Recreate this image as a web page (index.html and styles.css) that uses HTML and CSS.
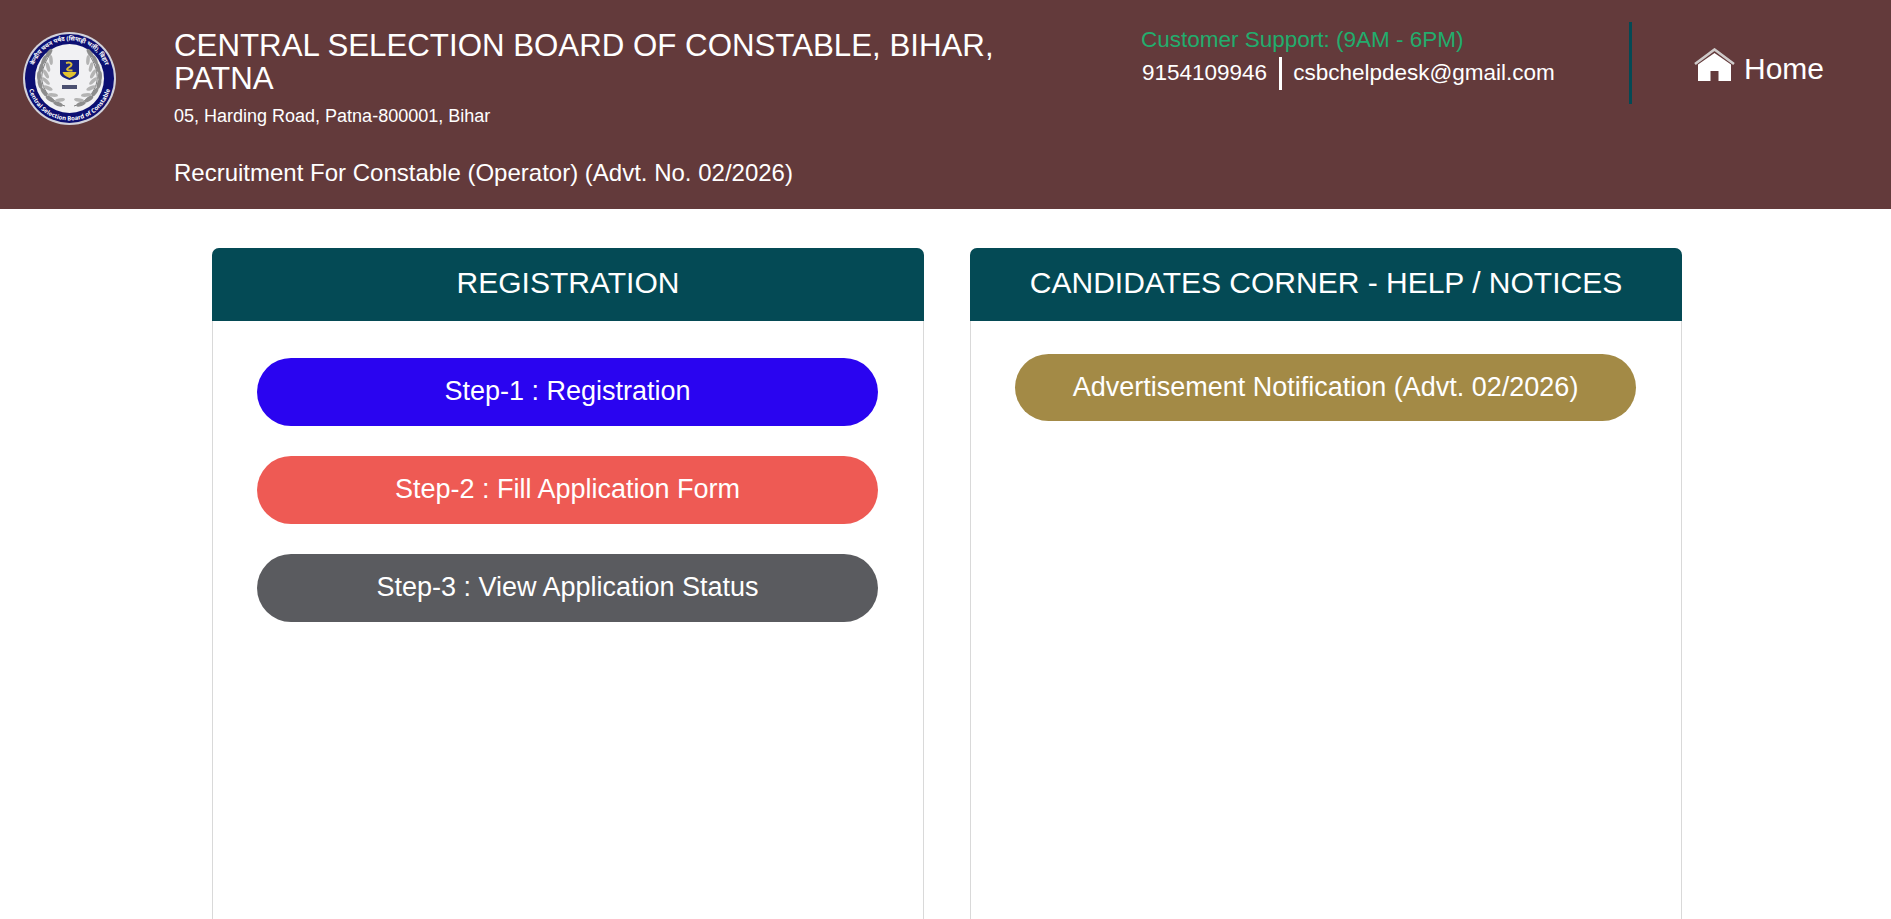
FILE: index.html
```html
<!DOCTYPE html>
<html lang="en">
<head>
<meta charset="utf-8">
<title>CSBC Bihar</title>
<link rel="stylesheet" href="styles.css">
</head>
<body>
<header class="top">
  <div class="logo-col">
    <svg class="emblem" viewBox="0 0 93 93" width="93" height="93">
      <defs>
        <path id="arc-top" d="M8.500 46.500a38 38 0 0 1 76 0"/>
        <path id="arc-bot" d="M4.500 46.500a42 42 0 0 0 84 0"/>
        <g id="branch">
          <path d="M42 74C28 70 17 56 19 42c1-7 4-14 9-21" fill="none" stroke="#7f7f7f" stroke-width="1"/>
          <g fill="#8d8d8d">
            <ellipse cx="35" cy="72" rx="5" ry="2" transform="rotate(20 35 72)"/>
            <ellipse cx="27" cy="67" rx="5" ry="2" transform="rotate(35 27 67)"/>
            <ellipse cx="21" cy="60" rx="5" ry="2" transform="rotate(55 21 60)"/>
            <ellipse cx="17" cy="52" rx="5" ry="2" transform="rotate(75 17 52)"/>
            <ellipse cx="16" cy="44" rx="5" ry="2" transform="rotate(90 16 44)"/>
            <ellipse cx="18" cy="36" rx="5" ry="2" transform="rotate(105 18 36)"/>
            <ellipse cx="21" cy="28" rx="5" ry="2" transform="rotate(115 21 28)"/>
            <ellipse cx="26" cy="21" rx="5" ry="2" transform="rotate(125 26 21)"/>
          </g>
          <g fill="#b4b4b4">
            <ellipse cx="37" cy="68" rx="5" ry="1.800" transform="rotate(-10 37 68)"/>
            <ellipse cx="30" cy="63" rx="5" ry="1.800" transform="rotate(5 30 63)"/>
            <ellipse cx="25" cy="56" rx="5" ry="1.800" transform="rotate(25 25 56)"/>
            <ellipse cx="23" cy="49" rx="5" ry="1.800" transform="rotate(45 23 49)"/>
            <ellipse cx="23" cy="42" rx="5" ry="1.800" transform="rotate(60 23 42)"/>
            <ellipse cx="25" cy="35" rx="5" ry="1.800" transform="rotate(75 25 35)"/>
            <ellipse cx="28" cy="28" rx="5" ry="1.800" transform="rotate(85 28 28)"/>
          </g>
        </g>
      </defs>
      <circle cx="46.500" cy="46.500" r="46.500" fill="#d2d2da"/>
      <circle cx="46.500" cy="46.500" r="44.500" fill="#0c0f72"/>
      <circle cx="46.500" cy="46.500" r="34.500" fill="#f1f1f3"/>
      <text class="emblem-text"><textPath href="#arc-top" startOffset="50%" text-anchor="middle">केन्द्रीय चयन पर्षद (सिपाही भर्ती), बिहार</textPath></text>
      <text class="emblem-text"><textPath href="#arc-bot" startOffset="50%" text-anchor="middle">Central Selection Board of Constable</textPath></text>
      <use href="#branch"/>
      <use href="#branch" transform="matrix(-1 0 0 1 93 0)"/>
      <path d="M37 28h19v13c0 3-4 5-9.500 7-5.500-2-9.500-4-9.500-7z" fill="#17217e"/>
      <path d="M39.500 40h14c-1 3-3 4.500-7 6-4-1.500-6-3-7-6z" fill="#e2c331"/>
      <path d="M43 31c6-1.500 7 2 3.500 4s-3.500 4 3 3.500" fill="none" stroke="#d8bd3a" stroke-width="2"/>
      <rect x="39" y="53" width="15" height="4" fill="#4b5070"/>
    </svg>
  </div>
  <div class="title-col">
    <h1 class="board">CENTRAL SELECTION BOARD OF CONSTABLE, BIHAR, PATNA</h1>
    <p class="address">05, Harding Road, Patna-800001, Bihar</p>
    <p class="recruit">Recruitment For Constable (Operator) (Advt. No. 02/2026)</p>
  </div>
  <div class="support-col">
    <div class="support-label">Customer Support: (9AM - 6PM)</div>
    <div class="contact">
      <span class="phone">9154109946</span>
      <span class="mail">csbchelpdesk@gmail.com</span>
    </div>
  </div>
  <a class="home" href="#">
    <svg class="home-icon" viewBox="0 0 41 33" width="41" height="33">
      <path d="M1 16 20.500 1.500 40 16" fill="none" stroke="#cfcbca" stroke-width="2.600"/>
      <path d="M4 33V16.500L20.500 5 37 16.500V33H24.500V23h-8v10z" fill="#fff"/>
    </svg>
    <span class="home-label">Home</span>
  </a>
</header>
<main class="panels">
  <section class="card">
    <h2 class="card-head">REGISTRATION</h2>
    <div class="card-body first">
      <a class="pill blue" href="#">Step-1 : Registration</a>
      <a class="pill red" href="#">Step-2 : Fill Application Form</a>
      <a class="pill grey" href="#">Step-3 : View Application Status</a>
    </div>
  </section>
  <section class="card">
    <h2 class="card-head">CANDIDATES CORNER - HELP / NOTICES</h2>
    <div class="card-body second">
      <a class="pill gold" href="#">Advertisement Notification (Advt. 02/2026)</a>
    </div>
  </section>
</main>
</body>
</html>
```
FILE: styles.css
```css
* { box-sizing: border-box; }
html, body {
  margin: 0;
  height: 919px;
  overflow: hidden;
  background: #fff;
  color: #fff;
  font-family: "Liberation Sans", Arial, sans-serif;
}
a { color: inherit; text-decoration: none; }

.top {
  display: flex;
  height: 209px;
  background: #633a3b;
}
.logo-col {
  width: 174px;
  flex: none;
  padding: 32px 0 0 23px;
}
.emblem { display: block; }
.emblem-text { font-size: 6px; font-weight: 700; fill: #fff; font-family: "Noto Sans", "Liberation Sans", sans-serif; }
.title-col {
  width: 967px;
  flex: none;
  padding: 29px 130px 0 0;
}
.board {
  margin: 0;
  font-size: 31.250px;
  font-weight: 400;
  line-height: 33px;
}
.address {
  margin: 10px 0 0;
  font-size: 18px;
  line-height: 22px;
}
.recruit {
  margin: 32px 0 0;
  font-size: 24px;
  line-height: 28px;
}
.support-col {
  width: 491px;
  flex: none;
  margin-top: 22px;
  height: 82px;
  border-right: 3px solid #044a55;
}
.support-label {
  margin-top: 5px;
  font-size: 22.500px;
  line-height: 25px;
  color: #22ad6d;
}
.contact {
  display: flex;
  align-items: center;
  margin: 5px 0 0 1px;
  font-size: 22.500px;
}
.phone {
  padding: 0 12px 2px 0;
  border-right: 3px solid #fff;
  line-height: 31px;
}
.mail { padding: 0 0 2px 11px; }
.home {
  display: flex;
  align-items: flex-start;
  gap: 9px;
  height: 33px;
  margin: 48px 0 0 62px;
  font-size: 30px;
}
.home-icon { display: block; flex: none; }
.home-label { line-height: 42px; }

.panels {
  display: flex;
  gap: 46px;
  padding: 39px 0 0 212px;
}
.card {
  width: 712px;
  height: 800px;
  border: 1px solid #d9d9d9;
  border-radius: 7px 7px 0 0;
}
.card-head {
  margin: -1px -1px 0;
  height: 73px;
  background: #044a55;
  border-radius: 7px 7px 0 0;
  font-size: 30px;
  font-weight: 400;
  line-height: 70px;
  text-align: center;
}
.card-body {
  display: flex;
  flex-direction: column;
  gap: 30px;
  padding: 0 45px 0 44px;
}
.card-body.first { padding-top: 37px; }
.card-body.second { padding-top: 33px; }
.pill {
  height: 68px;
  border-radius: 34px;
  font-size: 27px;
  line-height: 66px;
  text-align: center;
}
.blue { background: #2a04f0; }
.red { background: #ee5a54; }
.grey { background: #5a5b5f; }
.gold { background: #a38a46; height: 67px; }
```
